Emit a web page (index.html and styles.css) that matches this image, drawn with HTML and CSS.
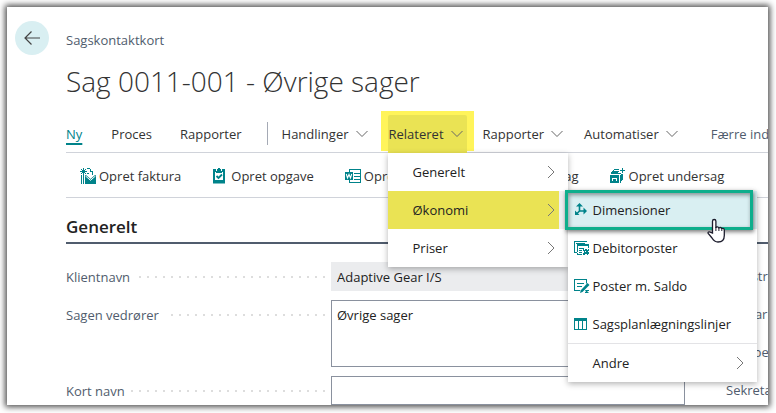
FILE: index.html
```html
<!DOCTYPE html>
<html lang="da">
<head>
<meta charset="utf-8">
<meta name="viewport" content="width=device-width, initial-scale=1">
<title>Sag 0011-001 - Øvrige sager</title>
<link rel="stylesheet" href="styles.css">
</head>
<body>
<svg class="sprite" aria-hidden="true">
  <symbol id="down" viewBox="0 0 12 8"><path d="M.5 1 6 6.500 11.500 1" fill="none" stroke="currentColor"/></symbol>
  <symbol id="right" viewBox="0 0 8 14"><path d="M1 1 7 7 1 13" fill="none" stroke="currentColor"/></symbol>
</svg>
<main class="page">
  <button class="back" type="button" aria-label="Tilbage">
    <svg width="16" height="14" viewBox="0 0 16 14"><path d="M16 7H1M7.500.5 1 7l6.500 6.500" fill="none" stroke="currentColor" stroke-width="1.200"/></svg>
  </button>
  <div class="content">
    <p class="caption">Sagskontaktkort</p>
    <h1>Sag 0011-001 - Øvrige sager</h1>

    <nav class="tabs">
      <button class="tab active" type="button">Ny</button>
      <button class="tab" type="button">Proces</button>
      <button class="tab" type="button">Rapporter</button>
      <span class="divider"></span>
      <button class="tab drop" type="button">Handlinger<svg class="down"><use href="#down"/></svg></button>
      <div class="open">
        <button class="tab drop current" type="button" aria-expanded="true">Relateret<svg class="down"><use href="#down"/></svg></button>
        <ul class="menu">
          <li><button class="item" type="button">Generelt<svg class="right"><use href="#right"/></svg></button></li>
          <li class="parent">
            <button class="item marked" type="button" aria-expanded="true">Økonomi<svg class="right"><use href="#right"/></svg></button>
            <ul class="menu submenu">
              <li class="parent">
                <button class="item hover" type="button">
                  <svg class="icon" width="16" height="16" viewBox="0 0 16 16"><path d="M5.500 9V3M5.500 9H11M5.500 9 2.500 12" fill="none" stroke="currentColor" stroke-width="1.600"/><path d="M5.500 1 9 4.500H2zM13 9l-3.500 3.500v-7zM1 8.500V13h4.500z"/></svg>
                  Dimensioner
                </button>
                <svg class="cursor" width="19" height="26" viewBox="0 0 19 26"><path d="M5.500 15V3.200a1.700 1.700 0 0 1 3.400 0V10c0-1.500 3-1.500 3 .5 0-1.500 2.900-1.400 2.900.6 0-1.200 2.500-1 2.500.9v5.500c0 4-2 6.500-6.300 6.500-3 0-4.500-1.500-6-4L1.200 15.500c-.6-1.200.8-2.200 2-1.400z" fill="#fff" stroke="#1c1c2c" stroke-width="1.300"/><path d="M8.900 9v4M11.900 10v3M14.800 11v2" stroke="#1c1c2c"/></svg>
              </li>
              <li><button class="item" type="button">
                <svg class="icon" width="16" height="16" viewBox="0 0 16 16" shape-rendering="crispEdges"><path d="M0 1h13v1H1v10h3v1H0zM3 4h12v4h-1V6H4v8h4v1H3zM5 8h5v1H5zM5 10h3v1H5zM5 12h3v1H5zM9 9h1v1h1V9h2v1h1V9h1v2h-1v1h1v2h-1v1h-1v-1h-2v1H9v-2h1v-2H9zM12 11h-1v1h1z" fill-rule="evenodd"/><path d="M2 3h9v1H2z"/></svg>
                Debitorposter</button></li>
              <li><button class="item" type="button">
                <svg class="icon" width="16" height="16" viewBox="0 0 16 16"><path d="M0 1h13v4l-1 1V2H1v10h5v1H0z"/><path d="M3 5h7v1H3zM3 8h5v1H3z"/><path d="m13.500 5 2 2-7 7L6 15l.8-2.800z"/><path d="M11 12h4v1h-2l2 2h-4v-1h1z"/></svg>
                Poster m. Saldo</button></li>
              <li><button class="item" type="button">
                <svg class="icon" width="16" height="16" viewBox="0 0 16 16" shape-rendering="crispEdges"><path d="M0 2h13v12H0zM1 5v8h3V5zM5 5v8h3V5zM9 5v8h3V5z" fill-rule="evenodd"/></svg>
                Sagsplanlægningslinjer</button></li>
              <li class="rest"><button class="item" type="button">Andre<svg class="right"><use href="#right"/></svg></button></li>
            </ul>
          </li>
          <li><button class="item" type="button">Priser<svg class="right"><use href="#right"/></svg></button></li>
        </ul>
      </div>
      <button class="tab drop" type="button">Rapporter<svg class="down"><use href="#down"/></svg></button>
      <button class="tab drop" type="button">Automatiser<svg class="down"><use href="#down"/></svg></button>
      <button class="tab fewer" type="button">Færre indstillinger</button>
    </nav>

    <div class="actions">
      <button class="action" type="button">
        <svg class="icon" width="16" height="16" viewBox="0 0 16 16" shape-rendering="crispEdges"><path d="M3 0h1v2h1V1h1v1H5v1h2v1H5v1h1v1H5V5H4v2H3V5H2v1H1V5h1V4H0V3h2V2H1V1h1v1h1zM7 0h3v1H7zM10 1h1v2h2v1h-3zM12 4h1v3h-1zM7 5h2v1H7zM1 7h1v9H1zM3 7h1v9H3z"/><path d="M5 7h1l4.500 4L15 7h1v9H5z" shape-rendering="auto"/><path d="m5.500 8 5 4.300 5-4.300" fill="none" stroke="#fff" shape-rendering="auto"/></svg>
        Opret faktura</button>
      <button class="action" type="button">
        <svg class="icon" width="16" height="16" viewBox="0 0 16 16"><path d="M1 1h3v3h6V1h3v14.500H1z"/><path d="M5 1h1V0h2v1h1v2H5z"/><path d="M3 4h8v8H3z" fill="#fff"/><path d="M4 3h6v2H4z"/><path d="m4.500 8 2 2 3.500-3.500" fill="none" stroke="currentColor" stroke-width="1.800"/></svg>
        Opret opgave</button>
      <button class="action" type="button">
        <svg class="icon" width="16" height="16" viewBox="0 0 16 16"><path d="M4 1h12v14H4v-3h1v2h10V2H5v2H4z"/><path d="M9 5h6v1H9zM9 8h6v1H9zM9 11h6v1H9z"/><path d="M0 4h8v8H0z"/><path d="m1.300 6 1.200 4L4 6.500 5.500 10l1.200-4" fill="none" stroke="#fff" stroke-width="1.100"/></svg>
        Opret dokument</button>
      <button class="action" type="button">
        <svg class="icon" width="16" height="16" viewBox="0 0 16 16"><path d="M1 3h14v11H1z"/></svg>
        Kopier sag</button>
      <button class="action" type="button">
        <svg class="icon" width="16" height="16" viewBox="0 0 16 16" shape-rendering="crispEdges"><path d="M12 0h1v2h2v1h-2v2h-1V3h-2V2h2zM4 1h5v1H4zM3 2h1v1h5v1H8v1h3v1H1V4h1V3h1zM0 7h9v8H0zM2 10v1h5v-1zM2 11v2h1v-2zM6 11v2h1v-2z" fill-rule="evenodd"/><path d="M10 7h1V6h2v6h-1v1h-1v2h-1z"/></svg>
        Opret undersag</button>
    </div>

    <h2>Generelt</h2>
    <form class="fields">
      <label class="name" for="client">Klientnavn</label>
      <input class="box locked" id="client" value="Adaptive Gear I/S" readonly>
      <span class="side">Registreret</span>
      <label class="name" for="about">Sagen vedrører</label>
      <textarea class="box tall" id="about">Øvrige sager</textarea>
      <span class="side">Ansvarlig</span>
      <span class="side third">Sagsbehandler</span>
      <label class="name fourth" for="short">Kort navn</label>
      <input class="box fourth" id="short">
      <span class="side fourth">Sekretær</span>
    </form>
  </div>
</main>
</body>
</html>
```
FILE: styles.css
```css
* { box-sizing: border-box; }

body {
  margin: 0;
  height: 100vh;
  padding: 7px 8px 8px 7px;
  overflow: hidden;
  background: #fff;
  color: #333;
  font: 13px/18px "Open Sans", "Noto Sans", sans-serif;
}

button, input, textarea { font: inherit; color: inherit; }
button { border: 0; padding: 0; background: none; white-space: nowrap; cursor: pointer; }
ul { margin: 0; padding: 0; list-style: none; }
.sprite { display: none; }

.page {
  display: flex;
  gap: 17px;
  height: 100%;
  padding: 14px 0 0 8px;
  background: #fff;
  box-shadow: 0 0 6px 2px rgba(0, 0, 0, .7);
  overflow: hidden;
}

.back {
  display: flex;
  flex: none;
  align-items: center;
  justify-content: center;
  width: 34px;
  height: 34px;
  border-radius: 50%;
  background: #d9eff2;
  color: #444;
}

.content { flex: 1; min-width: 0; padding-top: 10px; }
.caption { margin: 0; color: #505c6d; }

h1 {
  margin: 12px 0 0;
  color: #333;
  font-size: 28px;
  font-weight: 300;
  line-height: 40px;
  white-space: nowrap;
}

.tabs {
  display: flex;
  height: 42px;
  margin-top: 10px;
  padding-top: 4px;
  border-bottom: 1px solid #d0d3da;
}

.tab { flex: none; height: 38px; margin-right: 28px; line-height: 38px; color: #333; }
.active {
  margin-right: 29px;
  color: #00838a;
  text-decoration: underline 2px;
  text-underline-offset: 4px;
}
.divider { flex: none; width: 1px; height: 23px; margin: 7px 14px 0 -3px; background: #a5aab5; }
.drop { display: flex; align-items: center; gap: 7px; margin-right: 21px; }
.down { width: 12px; height: 8px; color: #666; }
.right { width: 8px; height: 14px; margin-left: auto; color: #777; }
.fewer { margin-left: 12px; color: #505c6d; }

.open { position: relative; flex: none; margin: -4px 9px 0 -8px; height: 40px; padding: 4px 7px 0; background: #fff45a; }
.current { height: 38px; margin: 0; padding: 0 4px 0 1px; border-radius: 2px 2px 0 0; background: #eae354; }

.menu {
  position: absolute;
  z-index: 2;
  top: 42px;
  left: 7px;
  width: 180px;
  background: #fff;
  box-shadow: 0 2px 6px rgba(0, 0, 0, .3);
}

.item {
  display: flex;
  align-items: center;
  width: 100%;
  height: 38px;
  padding: 0 13px 0 25px;
  color: #222;
}

.parent { position: relative; }
.marked { background: linear-gradient(90deg, #eae354 171px, #f0f0f2 171px); }
.submenu { top: 0; left: 100%; width: 189px; }
.submenu .item { padding-left: 6px; }
.icon { flex: none; margin-right: 3px; fill: #00838a; color: #00838a; }
.submenu .hover { background: #d9eff2; }
.hover::after {
  content: "";
  position: absolute;
  inset: -1px 4px -1px -3px;
  border: 3px solid #0eae8c;
  box-shadow: 1px 2px 4px rgba(0, 0, 0, .5), inset 1px 2px 4px rgba(0, 0, 0, .4);
}
.cursor { position: absolute; z-index: 1; top: 27px; left: 139px; }
.rest { border-top: 1px solid #e3e3e6; }
.submenu .rest .item { padding-left: 25px; }

.actions {
  display: flex;
  align-items: center;
  gap: 31px;
  height: 45px;
  padding: 1px 0 0 14px;
  border-bottom: 1px solid #d0d3da;
}
.action { display: flex; flex: none; align-items: center; }

h2 {
  margin: 16px 0 0;
  padding-bottom: 2px;
  border-bottom: 2px solid #505c6d;
  color: #222;
  font-size: 17px;
  font-weight: 600;
  line-height: 26px;
}

.fields {
  display: grid;
  grid-template-columns: 259px minmax(0, 1fr) 42px;
  grid-auto-rows: 29px;
  gap: 9px 0;
  margin-top: 18px;
  color: #505c6d;
}

.name { display: flex; align-items: center; gap: 6px; grid-column: 1; }
.name::after {
  content: "";
  flex: 1;
  height: 2px;
  background: repeating-linear-gradient(270deg, #ddd 0 2px, transparent 2px 8px);
}
.box {
  grid-column: 2;
  margin: 0 41px 0 6px;
  padding: 4px 5px;
  border: 1px solid #8a919e;
  border-radius: 0;
  outline: 0;
  background: #fff;
  color: #222;
  resize: none;
}
.locked { border-color: #ebecee; background: #ebecee; }
.tall { grid-row: 2 / span 2; padding-top: 5px; }
.side { grid-column: 3; line-height: 29px; white-space: nowrap; }
.third { grid-row: 3; }
.fourth { grid-row: 4; }
```
